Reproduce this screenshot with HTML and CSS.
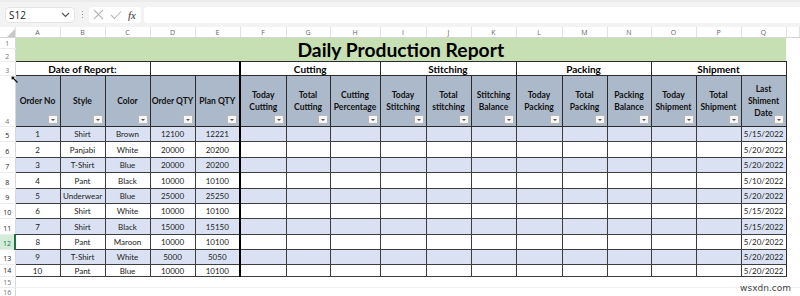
FILE: index.html
```html
<!DOCTYPE html>
<html lang="en">
<head>
  <meta charset="UTF-8" />
  <title>Daily Production Report</title>
  <link rel="stylesheet" href="styles.css">
</head>
<body>

  <div class="formula-bar">
    <div class="name-box">
      <span>S12</span>
      <svg class="chev" width="9" height="6" viewBox="0 0 9 6"><path d="M1 1 L4.5 4.5 L8 1" fill="none" stroke="#555" stroke-width="1.2"/></svg>
    </div>
    <div class="grip"><i></i><i></i><i></i></div>
    <div class="fx-tools">
      <svg width="11" height="11" viewBox="0 0 11 11"><path d="M1 1 L10 10 M10 1 L1 10" stroke="#b8b8b8" stroke-width="1.1"/></svg>
      <svg width="12" height="10" viewBox="0 0 12 10"><path d="M1 5 L4.5 8.5 L11 1.5" fill="none" stroke="#b8b8b8" stroke-width="1.1"/></svg>
      <span class="fx">fx</span>
    </div>
    <div class="formula-input"></div>
  </div>

  <table class="sheet">
    <colgroup>
      <col class="c-rh">
      <col class="c45"><col class="c45"><col class="c45"><col class="c45"><col class="c45">
      <col class="c46"><col class="c44"><col class="c50">
      <col class="c46"><col class="c45"><col class="c45">
      <col class="c46"><col class="c45"><col class="c44">
      <col class="c45"><col class="c45"><col class="c45">
      <col>
    </colgroup>
    <tr class="r-cols">
      <td class="corner"><svg width="8" height="8" viewBox="0 0 8 8"><path d="M8 0 L8 8 L0 8 Z" fill="#c8c8c8"/></svg></td>
      <td>A</td><td>B</td><td>C</td><td>D</td><td>E</td><td>F</td><td>G</td><td>H</td>
      <td>I</td><td>J</td><td>K</td><td>L</td><td>M</td><td>N</td><td>O</td><td>P</td><td>Q</td>
      <td></td>
    </tr>
    <tr class="r1">
      <td class="rh">1</td>
      <td class="title" colspan="17" rowspan="2">Daily Production Report</td>
      <td class="blank"></td>
    </tr>
    <tr class="r2">
      <td class="rh">2</td>
      <td class="blank"></td>
    </tr>
    <tr class="r3">
      <td class="rh">3</td>
      <td class="sec" colspan="3">Date of Report:</td>
      <td class="sec" colspan="2"></td>
      <td class="sec grp" colspan="3">Cutting</td>
      <td class="sec" colspan="3">Stitching</td>
      <td class="sec" colspan="3">Packing</td>
      <td class="sec" colspan="3">Shipment</td>
      <td class="blank"></td>
    </tr>
    <tr class="r4">
      <td class="rh">4</td>
      <td class="hd"><div class="hcell">Order No<span class="filter"></span></div></td>
      <td class="hd"><div class="hcell">Style<span class="filter"></span></div></td>
      <td class="hd"><div class="hcell">Color<span class="filter"></span></div></td>
      <td class="hd"><div class="hcell">Order QTY<span class="filter"></span></div></td>
      <td class="hd"><div class="hcell">Plan QTY<span class="filter"></span></div></td>
      <td class="hd grp"><div class="hcell">Today<br>Cutting<span class="filter"></span></div></td>
      <td class="hd"><div class="hcell">Total<br>Cutting<span class="filter"></span></div></td>
      <td class="hd"><div class="hcell">Cutting<br>Percentage<span class="filter"></span></div></td>
      <td class="hd"><div class="hcell">Today<br>Stitching<span class="filter"></span></div></td>
      <td class="hd"><div class="hcell">Total<br>stitching<span class="filter"></span></div></td>
      <td class="hd"><div class="hcell">Stitching<br>Balance<span class="filter"></span></div></td>
      <td class="hd"><div class="hcell">Today<br>Packing<span class="filter"></span></div></td>
      <td class="hd"><div class="hcell">Total<br>Packing<span class="filter"></span></div></td>
      <td class="hd"><div class="hcell">Packing<br>Balance<span class="filter"></span></div></td>
      <td class="hd"><div class="hcell">Today<br>Shipment<span class="filter"></span></div></td>
      <td class="hd"><div class="hcell">Total<br>Shipment<span class="filter"></span></div></td>
      <td class="hd"><div class="hcell">Last<br>Shiment<br>Date<span class="filter"></span></div></td>
      <td class="blank"></td>
    </tr>
    <tr class="row band h15"><td class="rh">5</td><td>1</td><td>Shirt</td><td>Brown</td><td>12100</td><td>12221</td><td class="grp"></td><td></td><td></td><td></td><td></td><td></td><td></td><td></td><td></td><td></td><td></td><td class="date">5/15/2022</td><td class="blank"></td></tr>
    <tr class="row h16"><td class="rh">6</td><td>2</td><td>Panjabi</td><td>White</td><td>20000</td><td>20200</td><td class="grp"></td><td></td><td></td><td></td><td></td><td></td><td></td><td></td><td></td><td></td><td></td><td class="date">5/20/2022</td><td class="blank"></td></tr>
    <tr class="row band h15"><td class="rh">7</td><td>3</td><td>T-Shirt</td><td>Blue</td><td>20000</td><td>20200</td><td class="grp"></td><td></td><td></td><td></td><td></td><td></td><td></td><td></td><td></td><td></td><td></td><td class="date">5/20/2022</td><td class="blank"></td></tr>
    <tr class="row h16"><td class="rh">8</td><td>4</td><td>Pant</td><td>Black</td><td>10000</td><td>10100</td><td class="grp"></td><td></td><td></td><td></td><td></td><td></td><td></td><td></td><td></td><td></td><td></td><td class="date">5/10/2022</td><td class="blank"></td></tr>
    <tr class="row band h15"><td class="rh">9</td><td>5</td><td>Underwear</td><td>Blue</td><td>25000</td><td>25250</td><td class="grp"></td><td></td><td></td><td></td><td></td><td></td><td></td><td></td><td></td><td></td><td></td><td class="date">5/20/2022</td><td class="blank"></td></tr>
    <tr class="row h15"><td class="rh">10</td><td>6</td><td>Shirt</td><td>White</td><td>10000</td><td>10100</td><td class="grp"></td><td></td><td></td><td></td><td></td><td></td><td></td><td></td><td></td><td></td><td></td><td class="date">5/15/2022</td><td class="blank"></td></tr>
    <tr class="row band h16"><td class="rh">11</td><td>7</td><td>Shirt</td><td>Black</td><td>15000</td><td>15150</td><td class="grp"></td><td></td><td></td><td></td><td></td><td></td><td></td><td></td><td></td><td></td><td></td><td class="date">5/15/2022</td><td class="blank"></td></tr>
    <tr class="row h15"><td class="rh active">12</td><td>8</td><td>Pant</td><td>Maroon</td><td>10000</td><td>10100</td><td class="grp"></td><td></td><td></td><td></td><td></td><td></td><td></td><td></td><td></td><td></td><td></td><td class="date">5/20/2022</td><td class="blank"></td></tr>
    <tr class="row band h15"><td class="rh">13</td><td>9</td><td>T-Shirt</td><td>White</td><td>5000</td><td>5050</td><td class="grp"></td><td></td><td></td><td></td><td></td><td></td><td></td><td></td><td></td><td></td><td></td><td class="date">5/20/2022</td><td class="blank"></td></tr>
    <tr class="row h12"><td class="rh">14</td><td>10</td><td>Pant</td><td>Blue</td><td>10000</td><td>10100</td><td class="grp"></td><td></td><td></td><td></td><td></td><td></td><td></td><td></td><td></td><td></td><td></td><td class="date last">5/20/2022</td><td class="blank"></td></tr>
    <tr class="r15"><td class="rh">15</td><td class="empty" colspan="18"></td></tr>
    <tr class="r16"><td class="rh">16</td><td class="empty" colspan="18"></td></tr>
  </table>

  <svg class="cursor" width="7" height="7" viewBox="0 0 7 7"><path d="M0.5 0.5 L4 0.8 L0.8 4 Z" fill="#111"/><path d="M1.5 1.5 L6.5 6.5" stroke="#111" stroke-width="1.2"/></svg>

  <div class="watermark">wsxdn.com</div>

</body>
</html>
```

FILE: styles.css
```css
body {
  margin: 0;
  width: 800px;
  height: 296px;
  overflow: hidden;
  position: relative;
  background: #fff;
  font-family: Lato, "Open Sans", sans-serif;
}

/* formula bar */

.formula-bar {
  height: 27px;
  box-sizing: border-box;
  background: #f3f3f3;
  border-top: 2px solid #ececec;
  display: flex;
  align-items: center;
  padding-left: 5px;
}

.name-box {
  width: 70px;
  height: 16px;
  box-sizing: border-box;
  background: #fff;
  border: 1px solid #e4e4e4;
  border-radius: 4px;
  display: flex;
  align-items: center;
  justify-content: space-between;
  padding: 0 4px 0 3px;
  font-family: "Open Sans", sans-serif;
  font-size: 10px;
  color: #222;
}

.grip {
  width: 14px;
  display: flex;
  flex-direction: column;
  align-items: center;
  gap: 2px;
}

.grip i {
  width: 1px;
  height: 1px;
  background: #999;
}

.fx-tools {
  width: 52px;
  height: 16px;
  background: #fff;
  border-radius: 4px;
  display: flex;
  align-items: center;
  gap: 6px;
  padding-left: 4px;
  box-sizing: border-box;
}

.fx {
  font-family: "Liberation Serif", serif;
  font-style: italic;
  font-size: 11px;
  color: #333;
}

.formula-input {
  flex: 1;
  height: 16px;
  margin-left: 3px;
  background: #fff;
  border-radius: 4px 0 0 4px;
}

/* sheet */

.sheet {
  border-collapse: collapse;
  table-layout: fixed;
  width: 800px;
}

.sheet td {
  padding: 0;
  overflow: hidden;
  white-space: nowrap;
  text-align: center;
}

.c-rh { width: 15px; }
.c44 { width: 44px; }
.c45 { width: 45px; }
.c46 { width: 46px; }
.c50 { width: 50px; }

.r-cols td {
  height: 10px;
  font-family: "Open Sans", sans-serif;
  font-size: 7px;
  color: #666;
  border-right: 1px solid #e2e2e2;
  border-bottom: 1px solid #d4d4d4;
}

.r-cols td.corner {
  text-align: right;
  vertical-align: bottom;
  line-height: 0;
}

.rh {
  font-family: "Open Sans", sans-serif;
  font-size: 7px;
  color: #777;
  vertical-align: bottom;
  border-right: 1px solid #d8d8d8;
  border-bottom: 1px solid #ececec;
  line-height: 9px;
}

.rh.active {
  background: #d2ecd9;
  color: #217346;
  border-right: 2px solid #217346;
}

.r1 td { height: 10px; }
.r2 td { height: 12px; }
.r3 td { height: 13px; }
.r4 td { height: 50px; }
.h15 td { height: 14px; }
.h16 td { height: 15px; }
.h12 td { height: 11px; }
.r15 td { height: 10px; }
.r16 td { height: 9px; }

.r16 td.rh {
  vertical-align: top;
}

.title {
  background: #c6e0b4;
  font-size: 19.3px;
  font-weight: 700;
  color: #000;
  line-height: 19px;
  padding-top: 2px;
  vertical-align: middle;
}

.sec {
  background: #fff;
  font-size: 10px;
  font-weight: 700;
  border: 1px solid #2b2b2b;
  line-height: 12px;
}

.grp {
  border-left: 2px solid #000 !important;
}

.hd {
  background: #acb9ca;
  border: 1px solid #2b2b2b;
  font-size: 8.5px;
  font-weight: 700;
  color: #111;
}

.hcell {
  position: relative;
  height: 50px;
  display: flex;
  align-items: center;
  justify-content: center;
  line-height: 12px;
  white-space: normal;
}

.filter {
  position: absolute;
  right: 2px;
  bottom: 2px;
  width: 8px;
  height: 7px;
  background: #f6f6f6;
  border: 1px solid #b9b9b9;
}

.filter::after {
  content: "";
  position: absolute;
  left: 2px;
  top: 3px;
  border-left: 2px solid transparent;
  border-right: 2px solid transparent;
  border-top: 2px solid #555;
}

.row td {
  font-size: 8px;
  color: #222;
  border: 1px solid #3d3d3d;
  line-height: 10px;
}

.row.band td {
  background: #d9e1f2;
}

.row td.rh,
.row.band td.rh {
  background: #fff;
  border: none;
  border-right: 1px solid #d8d8d8;
  border-bottom: 1px solid #ececec;
  font-size: 7px;
}

.row.band td.rh.active,
.row td.rh.active {
  background: #d2ecd9;
  border-right: 2px solid #217346;
}

.row td.date {
  text-align: right;
  padding-right: 2px;
  border-right: 1px solid #2b2b2b;
}

.row td.blank,
.row.band td.blank,
td.blank {
  background: #fff;
  border: none;
}

.empty {
  border-bottom: 1px solid #f0f0f0;
}

.cursor {
  position: absolute;
  left: 11px;
  top: 76px;
}

.watermark {
  position: absolute;
  right: 9px;
  bottom: 3px;
  font-family: "DejaVu Sans", sans-serif;
  font-size: 9px;
  color: #444;
}
```
